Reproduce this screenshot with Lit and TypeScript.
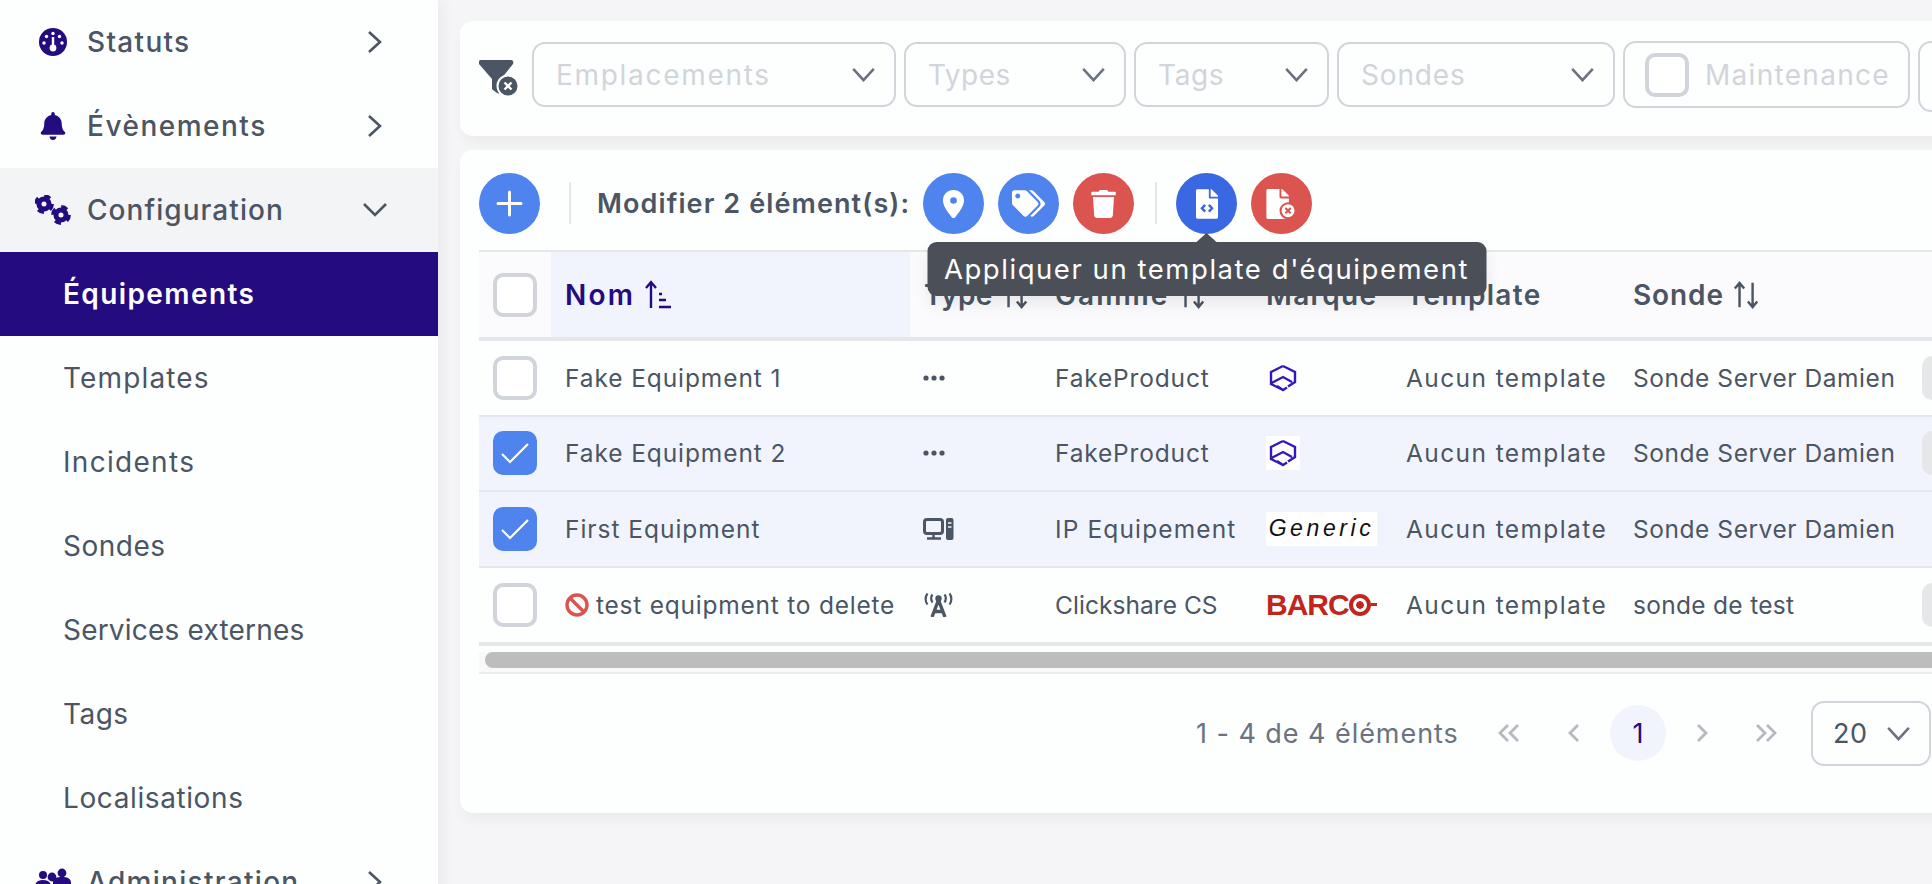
import { LitElement, html, svg, css } from 'lit'
import { customElement } from 'lit/decorators.js'

// per-label tracking, the installed face is narrower than the one in the reference
const TRACK: Record<string, number> = {
  Statuts: 1.3, 'Évènements': 1.5, Configuration: 1.05, 'Équipements': 1.4, Templates: 1.15, Incidents: 1.3,
  Sondes: 0.5, 'Services externes': 0.2, Tags: 0.45, Localisations: 0.6, Administration: 1.3,
  Emplacements: 1.7, Types: 0.5, Maintenance: 1.3,
  Nom: 2.2, Type: 0.35, Gamme: 2.1, Marque: 1.3, Template: 1.3, Sonde: 0.9,
  'Fake Equipment 1': 0.9, 'Fake Equipment 2': 0.9, 'First Equipment': 0.97, 'test equipment to delete': 0.77,
  FakeProduct: 0.83, 'IP Equipement': 1.13, 'Clickshare CS': 0.05, 'Aucun template': 1.4,
  'Sonde Server Damien': 0.55, 'sonde de test': 0.3,
}
const FILTER_TRACK: Record<string, number> = { Tags: 0.65, Sondes: 0.85 }

const t = (s: string, map: Record<string, number> = TRACK) =>
  html`<span style="letter-spacing:${map[s] ?? TRACK[s] ?? 0.8}px">${s}</span>`

const chevronRight = html`<svg class="nav-chev" viewBox="0 0 16 24"><path d="M2 2l11 10L2 22" /></svg>`
const chevronDown = html`<svg class="nav-chev" viewBox="0 0 26 16"><path d="M2 2l11 11L24 2" /></svg>`
const selectChevron = html`<svg class="sel-chev" viewBox="0 0 26 16"><path d="M2 2l11 12L24 2" /></svg>`

const gauge = html`<svg class="nav-ico" viewBox="0 0 28 28">
  <circle cx="14" cy="14" r="14" fill="currentColor" />
  <circle cx="14" cy="5.5" r="1.7" fill="#fff" /><circle cx="7.5" cy="8.5" r="1.7" fill="#fff" />
  <circle cx="20.5" cy="8.5" r="1.7" fill="#fff" /><circle cx="5" cy="15" r="1.7" fill="#fff" />
  <circle cx="23" cy="15" r="1.7" fill="#fff" />
  <path d="M14 9v10" stroke="#fff" stroke-width="2.4" /><circle cx="14" cy="20" r="3.4" fill="#fff" />
</svg>`
const bell = html`<svg class="nav-ico" viewBox="0 0 448 512"><path fill="currentColor" d="M224 512c35.32 0 63.97-28.65 63.97-64H160.03c0 35.35 28.65 64 63.97 64zm215.39-149.71c-19.32-20.76-55.47-51.99-55.47-154.29 0-77.7-54.48-139.9-127.94-155.16V32c0-17.67-14.32-32-31.98-32s-31.98 14.33-31.98 32v20.84C118.56 68.1 64.08 130.3 64.08 208c0 102.3-36.15 133.53-55.47 154.29-6 6.45-8.66 14.16-8.61 21.71.11 16.4 12.98 32 32.1 32h383.8c19.12 0 32-15.6 32.1-32 .05-7.55-2.61-15.27-8.61-21.71z" /></svg>`
const gear = (x: number, y: number, r: number) => svg`
  <circle cx=${x} cy=${y} r=${r * 0.56} fill="none" stroke="currentColor" stroke-width=${r * 0.56} />
  <circle cx=${x} cy=${y} r=${r * 0.92} fill="none" stroke="currentColor" stroke-width=${r * 0.36}
    stroke-dasharray=${`${r * 0.72} ${r * 0.725}`} />`
const cogs = html`<svg class="nav-ico wide" viewBox="0 0 36 30">${gear(9, 9, 9)}${gear(26, 20, 9)}</svg>`
const people = html`<svg class="nav-ico wide" viewBox="0 0 36 30" fill="currentColor">
  <circle cx="8" cy="8" r="4" /><circle cx="27" cy="6" r="4.4" /><circle cx="17" cy="10" r="4.4" />
  <path d="M0 20c0-5 3-7 8-7s8 2 8 7v3H0zM18 16c0-5 4-6 9-6s9 1 9 6v8H18z" />
</svg>`

const marker = html`<svg viewBox="0 0 24 32" class="act marker"><path fill="#fff" d="M12 0C5 0 0 5 0 12c0 6 5 13 10 19 1 1.300 3 1.300 4 0 5-6 10-13 10-19C24 5 19 0 12 0z" /><circle cx="12" cy="12" r="3.800" fill="#4f83ee" /></svg>`
const tags = html`<svg viewBox="0 0 640 512" class="act tags"><path fill="#fff" d="M497.941 225.941L286.059 14.059A48 48 0 0 0 252.118 0H48C21.49 0 0 21.49 0 48v204.118a48 48 0 0 0 14.059 33.941l211.882 211.882c18.744 18.745 49.136 18.746 67.882 0l204.118-204.118c18.745-18.745 18.745-49.137 0-67.882zM112 160c-26.51 0-48-21.49-48-48s21.49-48 48-48 48 21.49 48 48-21.49 48-48 48zm513.941 133.823L421.823 497.941c-18.745 18.745-49.137 18.745-67.882 0l-.36-.36L527.64 323.522c16.999-16.999 26.36-39.6 26.36-63.64s-9.362-46.641-26.36-63.64L331.397 0h48.721a48 48 0 0 1 33.941 14.059l211.882 211.882c18.745 18.745 18.745 49.137 0 67.882z" /></svg>`
const trash = html`<svg viewBox="0 0 448 512" class="act trash"><path fill="#fff" d="M432 32H312l-9.400-18.700A24 24 0 0 0 281.100 0H166.800a23.720 23.720 0 0 0-21.400 13.300L136 32H16A16 16 0 0 0 0 48v32a16 16 0 0 0 16 16h416a16 16 0 0 0 16-16V48a16 16 0 0 0-16-16zM53.200 467a48 48 0 0 0 47.900 45h245.800a48 48 0 0 0 47.900-45L416 128H32z" /></svg>`
const filePath = 'M224 136V0H24C10.700 0 0 10.700 0 24v464c0 13.300 10.700 24 24 24h336c13.300 0 24-10.700 24-24V160H248c-13.200 0-24-10.800-24-24zm160-14.100v6.100H256V0h6.100c6.400 0 12.500 2.500 17 7l97.900 98c4.500 4.500 7 10.600 7 16.900z'
const fileCode = html`<svg viewBox="0 0 384 512" class="act file"><path fill="#fff" d=${filePath} /><path d="M160 270l-56 60 56 60M224 270l56 60-56 60" fill="none" stroke="#3a68e2" stroke-width="44" /></svg>`
const fileTimes = html`<svg viewBox="0 0 516 512" class="act file-x"><path fill="#fff" d=${filePath} />
  <circle cx="370" cy="370" r="128" fill="#fff" stroke="#dc544f" stroke-width="36" />
  <path d="M325 325l90 90M415 325l-90 90" stroke="#dc544f" stroke-width="36" /></svg>`

const funnel = html`<svg class="funnel" viewBox="0 0 40 36">
  <path fill="#4b5563" d="M2 0h30c2 0 3 2 2 4L22 19v12c0 2-2 3-4 2l-4-3-1-1V19L0 4C-1 2 0 0 2 0z" />
  <circle cx="29" cy="26" r="10.500" fill="#4b5563" stroke="#fcfffe" stroke-width="2" />
  <path d="M25.500 22.500l7 7M32.500 22.500l-7 7" stroke="#fff" stroke-width="2.400" />
</svg>`

const dots = html`<svg class="type-ico" viewBox="0 0 22 24" fill="currentColor"><circle cx="3" cy="12" r="2.600" /><circle cx="11" cy="12" r="2.600" /><circle cx="19" cy="12" r="2.600" /></svg>`
const desktop = html`<svg class="type-ico wide" viewBox="0 0 31 24" fill="none">
  <rect x="1.500" y="2.500" width="18" height="14" rx="2.500" stroke="currentColor" stroke-width="3" />
  <path d="M10.500 17v4M4 21.500h14" stroke="currentColor" stroke-width="2.500" />
  <rect x="23" y="1" width="7.500" height="22" rx="2" fill="currentColor" />
  <path d="M25 6h3.500M25 10h3.500" stroke="#f1f4fd" stroke-width="1.600" />
</svg>`
const tower = html`<svg class="type-ico wide" viewBox="0 0 28 24" fill="none" stroke="currentColor" stroke-width="3.400">
  <path d="M14 7L7.500 24M14 7l6.500 17M9.500 18.500h9" /><circle cx="14" cy="5.500" r="3.200" fill="currentColor" stroke="none" />
  <path d="M8 1.500c-1.500 2-1.500 5.500 0 8M20 1.500c1.500 2 1.500 5.500 0 8M3 0.500c-2.500 3-2.500 8 0 11M25 0.500c2.500 3 2.500 8 0 11" stroke-width="2.200" />
</svg>`
const ban = html`<svg class="ban" viewBox="0 0 24 24" fill="none" stroke="#dc544f" stroke-width="3.400"><circle cx="12" cy="12" r="10" /><path d="M5 5l14 14" /></svg>`
const hexLogo = html`<svg class="hex" viewBox="0 0 30 30" fill="none" stroke="#3418b8" stroke-width="2.400">
  <path d="M15 3l12 6v10l-7 4.500M15 27l-12-6V9l12-6M3.500 20l11.500-6 9 5M9 23l6 4 4-2.500" />
</svg>`
const sortActive = html`<svg class="sort" viewBox="0 0 28 30" fill="none" stroke="currentColor" stroke-width="2.400">
  <path d="M7 28V3M2 8l5-6 5 6" /><path d="M15 14h3M15 20h7M15 27h12" />
</svg>`
const sortBoth = html`<svg class="sort" viewBox="0 0 30 30" fill="none" stroke="currentColor" stroke-width="2.600">
  <path d="M7 28V3M2 8l5-6 5 6M21 2v25M16 22l5 6 5-6" />
</svg>`

const checkMark = html`<svg viewBox="0 0 28 22" class="tick"><path d="M1 12l8 8L27 2" /></svg>`

interface NavItem { label: string; icon?: unknown; open?: boolean; active?: boolean; sub?: boolean }

const NAV: NavItem[] = [
  { label: 'Statuts', icon: gauge },
  { label: 'Évènements', icon: bell },
  { label: 'Configuration', icon: cogs, open: true },
  { label: 'Équipements', sub: true, active: true },
  { label: 'Templates', sub: true },
  { label: 'Incidents', sub: true },
  { label: 'Sondes', sub: true },
  { label: 'Services externes', sub: true },
  { label: 'Tags', sub: true },
  { label: 'Localisations', sub: true },
  { label: 'Administration', icon: people },
]

const FILTERS = [
  { label: 'Emplacements', width: 364 },
  { label: 'Types', width: 222 },
  { label: 'Tags', width: 195 },
  { label: 'Sondes', width: 278 },
]

const ROWS = [
  { name: 'Fake Equipment 1', type: dots, range: 'FakeProduct', brand: 'hex', probe: 'Sonde Server Damien', tag: true },
  { name: 'Fake Equipment 2', type: dots, range: 'FakeProduct', brand: 'hex', probe: 'Sonde Server Damien', selected: true, tag: true },
  { name: 'First Equipment', type: desktop, range: 'IP Equipement', brand: 'generic', probe: 'Sonde Server Damien', selected: true },
  { name: 'test equipment to delete', type: tower, range: 'Clickshare CS', brand: 'barco', probe: 'sonde de test', banned: true, tag: true },
]

@customElement('app-root')
export class AppRoot extends LitElement {
  static styles = css`
    :host {
      display: grid;
      grid-template-columns: 438px 1fr;
      width: 1932px;
      height: 884px;
      overflow: hidden;
      background: #f5f5f7;
      font-family: Inter, "Open Sans", sans-serif;
      color: #4b5563;
    }
    aside {
      background: #fcfffe;
      box-shadow: 4px 0 14px rgba(0, 0, 0, 0.05);
      height: 924px;
      z-index: 1;
    }
    .nav {
      height: 84px;
      display: flex;
      align-items: center;
      font-size: 28px;
      font-weight: 500;
    }
    .nav.sub { padding-left: 63px; font-weight: 400; }
    .nav.open { background: #f3f4f6; }
    .nav.active { background: #240b80; color: #fff; font-weight: 600; }
    .nav .slot {
      width: 87px;
      display: flex;
      justify-content: center;
      padding-left: 19px;
      box-sizing: border-box;
      color: #240b80;
    }
    .nav .label { flex: 1; }
    .nav .caret { width: 26px; margin-right: 50px; display: flex; justify-content: center; }
    .nav-ico { width: 28px; height: 28px; }
    .nav-ico.wide { width: 36px; height: 30px; }
    .nav-chev { width: 16px; height: 24px; fill: none; stroke: #4b5563; stroke-width: 2.6; }
    svg.nav-chev[viewBox="0 0 26 16"] { width: 26px; height: 16px; }

    main { padding: 21px 0 0 22px; display: flex; flex-direction: column; gap: 14px; min-width: 0; }
    .card {
      width: 1540px;
      background: #fcfffe;
      border-radius: 13px;
      box-shadow: 0 8px 16px -4px rgba(0, 0, 0, 0.06);
    }
    .filters {
      height: 115px;
      box-sizing: border-box;
      padding: 21px 0 0 19px;
      display: flex;
      align-items: flex-start;
      gap: 8px;
    }
    .funnel { width: 40px; height: 36px; margin-top: 18px; margin-right: 5px; flex: none; }
    .select {
      height: 65px;
      box-sizing: border-box;
      border: 2.500px solid #d1d5db;
      border-radius: 13px;
      display: flex;
      align-items: center;
      justify-content: space-between;
      padding: 0 18px 0 22px;
      font-size: 28px;
      color: #d1d5db;
      flex: none;
    }
    .sel-chev { width: 25px; height: 15px; fill: none; stroke: #6b7280; stroke-width: 2.800; }
    .maint {
      width: 287px;
      height: 67px;
      margin-top: -1px;
      box-sizing: border-box;
      border: 2.500px solid #d1d5db;
      border-radius: 13px;
      display: flex;
      align-items: center;
      gap: 16px;
      padding-left: 20px;
      font-size: 28px;
      color: #d1d5db;
      flex: none;
    }
    .box {
      width: 44px;
      height: 44px;
      box-sizing: border-box;
      border: 4px solid #d1d5db;
      border-radius: 10px;
      background: #fff;
      flex: none;
      display: flex;
      align-items: center;
      justify-content: center;
    }
    .box.on { background: #4f83ee; border-color: #4f83ee; }
    .tick { width: 28px; height: 22px; fill: none; stroke: #fff; stroke-width: 2.200; }
    .stub { width: 100px; height: 67px; margin-top: -1px; border: 2.500px solid #d1d5db; border-radius: 13px; flex: none; }

    .table-card { height: 663px; }
    .toolbar {
      height: 100px;
      box-sizing: border-box;
      padding: 23px 0 0 19px;
      display: flex;
      align-items: flex-start;
      gap: 14px;
    }
    .round {
      position: relative;
      width: 61px;
      height: 61px;
      border-radius: 50%;
      background: #4f83ee;
      display: flex;
      align-items: center;
      justify-content: center;
      flex: none;
    }
    .round.red { background: #dc544f; }
    .round.deep { background: #3a68e2; }
    .marker { width: 21px; height: 28px; }
    .tags { width: 33px; height: 27px; }
    .trash { width: 25px; height: 28px; }
    .file { width: 22px; height: 30px; }
    .file-x { width: 31px; height: 30px; }
    .plus { width: 27px; height: 27px; fill: none; stroke: #fff; stroke-width: 3; stroke-linecap: round; }
    .vr { width: 2px; height: 42px; margin: 9px 0 0; background: #e5e7eb; flex: none; }
    .vr.first { margin-left: 15px; margin-right: 12px; }
    .vr.second { margin-left: 7px; margin-right: 5px; }
    .modify { font-size: 27px; font-weight: 600; letter-spacing: 1.1px; line-height: 61px; white-space: nowrap; width: 312px; flex: none; }
    .tooltip {
      position: absolute;
      top: 69px;
      left: 50%;
      transform: translateX(-50%);
      width: 559px;
      height: 54px;
      box-sizing: border-box;
      background: #4b5058;
      color: #fff;
      border-radius: 9px;
      font-size: 27.500px;
      letter-spacing: 1.55px;
      line-height: 54px;
      text-align: center;
      white-space: nowrap;
      z-index: 3;
      box-shadow: 0 8px 16px rgba(0, 0, 0, 0.08);
    }
    .tooltip::before {
      content: '';
      position: absolute;
      top: -9px;
      left: 50%;
      margin-left: -10px;
      border-left: 10px solid transparent;
      border-right: 10px solid transparent;
      border-bottom: 9px solid #4b5058;
    }

    .grid { margin-left: 19px; }
    .row {
      display: grid;
      grid-template-columns: 72px 359px 131px 211px 140px 227px 288px 60px;
      align-items: center;
      box-sizing: border-box;
    }
    .head {
      height: 91px;
      border-top: 2px solid #e5e7eb;
      border-bottom: 4px solid #e5e7eb;
      background: #fbfbfd;
      font-size: 28px;
      font-weight: 600;
    }
    .head > div { height: 100%; display: flex; align-items: center; gap: 9px; padding-left: 14px; white-space: nowrap; }
    .head > .cell-check, .body .cell-check { padding-left: 14px; }
    .head > .sorted { background: #f1f4fd; color: #240b80; }
    .sort { width: 28px; height: 30px; }
    .body {
      height: 75.500px;
      border-bottom: 2px solid #e5e7eb;
      font-size: 24.500px;
    }
    .body.last { height: 78.500px; border-bottom-width: 4px; }
    .body.sel { background: #f1f4fd; }
    .body > div { padding-left: 14px; white-space: nowrap; display: flex; align-items: center; }
    .body > .type { padding-left: 13px; }
    .body > .brand { padding-left: 14px; }
    .type-ico { width: 22px; height: 24px; }
    .type-ico.wide { width: 31px; height: 24px; }
    .ban { width: 24px; height: 24px; margin-right: 7px; }
    .logo { height: 34px; display: flex; align-items: center; }
    .sel .logo { background: #fff; }
    .hex { width: 30px; height: 30px; margin: 0 2px; }
    .generic {
      width: 111px;
      justify-content: center;
      font: italic 23px "Liberation Sans", sans-serif;
      letter-spacing: 3.6px;
      color: #111;
    }
    .barco {
      font: bold 30px "Liberation Sans", sans-serif;
      letter-spacing: -1px;
      color: #c0261d;
    }
    .barco i {
      width: 22px;
      height: 22px;
      box-sizing: border-box;
      border: 4px solid #c0261d;
      border-radius: 50%;
      background: radial-gradient(circle, #c0261d 0 3.500px, transparent 4px);
      flex: none;
    }
    .barco b { width: 6px; height: 3px; background: #c0261d; }
    .tag { width: 40px; height: 44px; margin-left: 1px; background: #e6e7e9; border-radius: 10px 0 0 10px; }

    .scroll { margin: 6px 0 0 19px; height: 22px; box-sizing: border-box; padding: 0 0 0 6px; border-bottom: 2px solid #ececee; background: #faf9f9; }
    .scroll div { height: 16px; background: #bdbdbd; border-radius: 8px 0 0 8px; }

    .pager {
      display: flex;
      align-items: center;
      height: 118px;
      padding-left: 736px;
      font-size: 27px;
      color: #6b7280;
    }
    .count { width: 302px; white-space: nowrap; flex: none; letter-spacing: 0.95px; }
    .pg { width: 22px; height: 18px; flex: none; fill: none; stroke: #b4b9c2; stroke-width: 2.800; }
    .pg-one { margin-right: 48px; }
    .pg-prev { width: 12px; margin-right: 30px; }
    .current {
      width: 56px;
      height: 56px;
      border-radius: 50%;
      background: #f1f4fd;
      color: #240b80;
      display: flex;
      align-items: center;
      justify-content: center;
      flex: none;
      margin-right: 30px;
    }
    .pg-next { width: 12px; margin-right: 47px; }
    .pg-last { margin-right: 34px; }
    .size {
      width: 120px;
      height: 65px;
      box-sizing: border-box;
      border: 2.500px solid #d1d5db;
      border-radius: 13px;
      display: flex;
      align-items: center;
      gap: 18px;
      padding-left: 20px;
      color: #4b5563;
      flex: none;
      letter-spacing: 0.5px;
    }
  `

  private _nav(item: NavItem) {
    const cls = ['nav', item.sub ? 'sub' : '', item.open ? 'open' : '', item.active ? 'active' : ''].join(' ')
    if (item.sub) return html`<div class=${cls}>${t(item.label)}</div>`
    return html`<div class=${cls}>
      <span class="slot">${item.icon}</span>
      <span class="label">${t(item.label)}</span>
      <span class="caret">${item.open ? chevronDown : chevronRight}</span>
    </div>`
  }

  private _brand(kind: string) {
    if (kind === 'hex') return html`<div class="logo">${hexLogo}</div>`
    if (kind === 'generic') return html`<div class="logo generic">Generic</div>`
    return html`<div class="logo barco">BARC<i></i><b></b></div>`
  }

  render() {
    return html`
      <aside>${NAV.map((n) => this._nav(n))}</aside>
      <main>
        <section class="card filters">
          ${funnel}
          ${FILTERS.map(
            (f) => html`<div class="select" style="width:${f.width}px">${t(f.label, FILTER_TRACK)}${selectChevron}</div>`,
          )}
          <div class="maint"><span class="box"></span>${t('Maintenance')}</div>
          <div class="stub"></div>
        </section>

        <section class="card table-card">
          <div class="toolbar">
            <div class="round"><svg class="plus" viewBox="0 0 27 27"><path d="M13.500 2v23M2 13.500h23" /></svg></div>
            <div class="vr first"></div>
            <div class="modify">Modifier 2 élément(s):</div>
            <div class="round">${marker}</div>
            <div class="round">${tags}</div>
            <div class="round red">${trash}</div>
            <div class="vr second"></div>
            <div class="round deep">${fileCode}
              <div class="tooltip">Appliquer un template d'équipement</div>
            </div>
            <div class="round red">${fileTimes}</div>
          </div>

          <div class="grid">
            <div class="row head">
              <div class="cell-check"><span class="box"></span></div>
              <div class="sorted">${t('Nom')} ${sortActive}</div>
              <div>${t('Type')} ${sortBoth}</div>
              <div>${t('Gamme')} ${sortBoth}</div>
              <div>${t('Marque')}</div>
              <div>${t('Template')}</div>
              <div>${t('Sonde')} ${sortBoth}</div>
              <div></div>
            </div>
            ${ROWS.map(
              (r, i) => html`<div class="row body ${r.selected ? 'sel' : ''} ${i === ROWS.length - 1 ? 'last' : ''}">
                <div class="cell-check"><span class="box ${r.selected ? 'on' : ''}">${r.selected ? checkMark : ''}</span></div>
                <div>${r.banned ? ban : ''}${t(r.name)}</div>
                <div class="type">${r.type}</div>
                <div>${t(r.range)}</div>
                <div class="brand">${this._brand(r.brand)}</div>
                <div>${t('Aucun template')}</div>
                <div>${t(r.probe)}</div>
                <div>${r.tag ? html`<span class="tag"></span>` : ''}</div>
              </div>`,
            )}
          </div>
          <div class="scroll"><div></div></div>

          <div class="pager">
            <span class="count">1 - 4 de 4 éléments</span>
            <svg class="pg pg-one" viewBox="0 0 22 18"><path d="M10 1L2 9l8 8M20 1l-8 8 8 8" /></svg>
            <svg class="pg pg-prev" viewBox="0 0 12 18"><path d="M10 1L2 9l8 8" /></svg>
            <span class="current">1</span>
            <svg class="pg pg-next" viewBox="0 0 12 18"><path d="M2 1l8 8-8 8" /></svg>
            <svg class="pg pg-last" viewBox="0 0 22 18"><path d="M2 1l8 8-8 8M12 1l8 8-8 8" /></svg>
            <div class="size">20 ${selectChevron}</div>
          </div>
        </section>
      </main>
    `
  }
}
